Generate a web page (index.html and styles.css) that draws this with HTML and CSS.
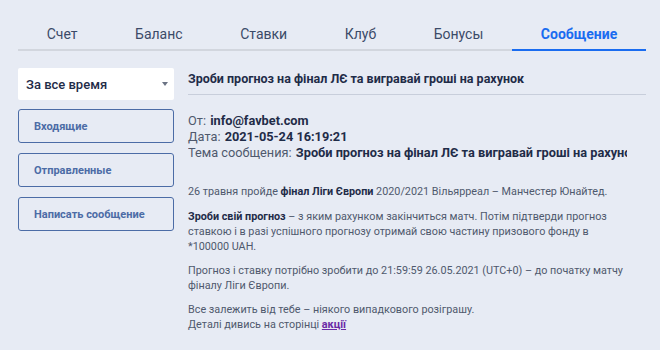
FILE: index.html
```html
<!DOCTYPE html>
<html lang="uk">

<head>
    <meta charset="UTF-8" />
    <meta name="viewport" content="width=device-width, initial-scale=1.0" />
    <link rel="stylesheet" href="styles.css">
    <title>Сообщение</title>
</head>

<body>

    <!-- account tabs -->
    <nav class="tabs">
        <a class="tab" href="#">Счет</a>
        <a class="tab" href="#">Баланс</a>
        <a class="tab" href="#">Ставки</a>
        <a class="tab" href="#">Клуб</a>
        <a class="tab" href="#">Бонусы</a>
        <a class="tab active" href="#">Сообщение</a>
    </nav>

    <div class="content">
        <!-- left menu -->
        <aside class="sidebar">
            <div class="select">
                <span>За все время</span>
                <span class="caret"></span>
            </div>
            <button class="side-btn">Входящие</button>
            <button class="side-btn">Отправленные</button>
            <button class="side-btn">Написать сообщение</button>
        </aside>

        <!-- message -->
        <main class="message">
            <h1 class="message-title">Зроби прогноз на фінал ЛЄ та вигравай гроші на рахунок</h1>

            <div class="meta">
                <div>От: <b>info@favbet.com</b></div>
                <div>Дата: <b>2021-05-24 16:19:21</b></div>
                <div class="subject">Тема сообщения: <b>Зроби прогноз на фінал ЛЄ та вигравай гроші на рахунок</b></div>
            </div>

            <div class="message-body">
                <p>26 травня пройде <b>фінал Ліги Європи</b> 2020/2021 Вільярреал – Манчестер Юнайтед.</p>
                <p><b>Зроби свій прогноз</b> – з яким рахунком закінчиться матч. Потім підтверди прогноз ставкою і в разі успішного прогнозу отримай свою частину призового фонду в *100000 UAH.</p>
                <p>Прогноз і ставку потрібно зробити до 21:59:59 26.05.2021 (UTC+0) – до початку матчу фіналу Ліги Європи.</p>
                <p>Все залежить від тебе – ніякого випадкового розіграшу.<br>Деталі дивись на сторінці <a href="#">акції </a></p>
            </div>
        </main>
    </div>

</body>

</html>
```

FILE: styles.css
```css
:root {
    --bg: #e7ebf4;
    --text-dark: #1f2c48;
    --text-grey: #4f596d;
    --blue: #1a6cf0;
    --btn-blue: #4c6ca6;
}

* {
    box-sizing: border-box;
}

body {
    background-color: var(--bg);
    font-family: Roboto, 'Liberation Sans', sans-serif;
    margin: 0;
    color: var(--text-dark);
}

.tabs {
    display: flex;
    margin: 0 14px 0 18px;
    border-bottom: 2px solid #d2d6de;
}

.tab {
    flex: 1 1 auto;
    text-align: center;
    padding: 26px 28px 7px;
    line-height: 16px;
    font-size: 14px;
    color: #3b4a68;
    text-decoration: none;
    white-space: nowrap;
    border-bottom: 2px solid transparent;
    margin-bottom: -2px;
}

.tab.active {
    color: var(--blue);
    font-weight: 700;
    border-bottom-color: var(--blue);
}

.content {
    display: flex;
    gap: 14px;
    padding: 17px 14px 0 18px;
}

.sidebar {
    width: 156px;
    flex: none;
    display: flex;
    flex-direction: column;
    gap: 10px;
}

.select {
    display: flex;
    align-items: center;
    justify-content: space-between;
    height: 32px;
    background: white;
    border-radius: 2px;
    padding: 0 6px 0 8px;
    font-size: 13px;
    font-weight: 500;
    margin-bottom: -1px;
}

/* small grey triangle */
.caret {
    width: 0;
    height: 0;
    border-left: 3.5px solid transparent;
    border-right: 3.5px solid transparent;
    border-top: 4px solid #6b7384;
}

.side-btn {
    height: 34px;
    text-align: left;
    padding: 0 15px;
    background: transparent;
    border: 1px solid var(--btn-blue);
    border-radius: 3px;
    color: var(--btn-blue);
    font-family: inherit;
    font-size: 11px;
    font-weight: 700;
    cursor: pointer;
}

.message {
    flex: 1;
    min-width: 0;
}

.message-title {
    font-size: 12.5px;
    font-weight: 700;
    line-height: 16px;
    margin: 0;
    padding: 3px 0 7px;
    border-bottom: 1px solid #c8cedb;
}

.meta {
    margin-top: 18px;
    padding-right: 19px;
    font-size: 12.75px;
    line-height: 16px;
    color: var(--text-grey);
}

.meta b {
    color: var(--text-dark);
    margin-left: 1px;
}

.subject {
    white-space: nowrap;
    overflow: hidden;
}

.message-body {
    margin-top: 23px;
    padding-right: 19px;
    font-size: 10.8px;
    line-height: 15px;
    color: var(--text-grey);
}

.message-body p {
    margin: 0 0 9px;
}

.message-body p:first-child {
    margin-bottom: 10px;
}

.message-body b {
    color: var(--text-dark);
}

.message-body a {
    color: #6b2aa6;
    font-weight: 700;
}
```
